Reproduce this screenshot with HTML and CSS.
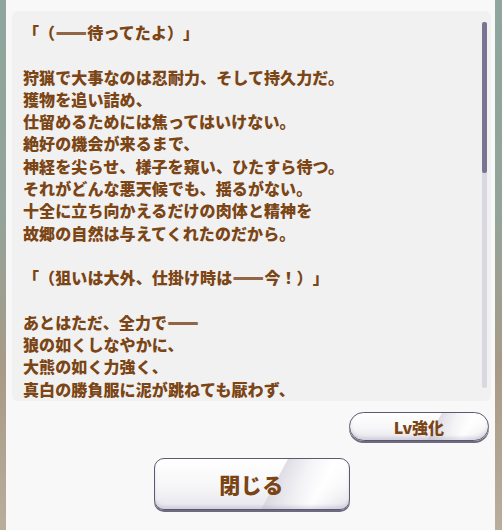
FILE: index.html
```html
<!DOCTYPE html>
<html lang="ja">
<head>
<meta charset="utf-8">
<link rel="stylesheet" href="styles.css">
</head>
<body>
<div class="panel">
  <div class="textbox">
    <div class="text">
      <p>「（<span class="dash">――</span>待ってたよ）」</p>
      <p>&nbsp;</p>
      <p>狩猟で大事なのは忍耐力、そして持久力だ。</p>
      <p>獲物を追い詰め、</p>
      <p>仕留めるためには焦ってはいけない。</p>
      <p>絶好の機会が来るまで、</p>
      <p>神経を尖らせ、様子を窺い、ひたすら待つ。</p>
      <p>それがどんな悪天候でも、揺るがない。</p>
      <p>十全に立ち向かえるだけの肉体と精神を</p>
      <p>故郷の自然は与えてくれたのだから。</p>
      <p>&nbsp;</p>
      <p>「（狙いは大外、仕掛け時は<span class="dash">――</span>今！）」</p>
      <p>&nbsp;</p>
      <p>あとはただ、全力で<span class="dash">――</span></p>
      <p>狼の如くしなやかに、</p>
      <p>大熊の如く力強く、</p>
      <p>真白の勝負服に泥が跳ねても厭わず、</p>
    </div>
    <div class="scrolltrack"><div class="scrollthumb"></div></div>
  </div>
  <div class="row-right">
    <button class="btn btn-small">Lv強化</button>
  </div>
  <div class="row-center">
    <button class="btn btn-large">閉じる</button>
  </div>
</div>
</body>
</html>
```
FILE: styles.css
```css
* { box-sizing: border-box; }
html, body { margin: 0; padding: 0; }
body {
  width: 502px;
  height: 530px;
  overflow: hidden;
  background: linear-gradient(to bottom, #8fa59d 0%, #93a49a 40%, #a89a86 70%, #b9ad9c 100%);
  font-family: "Noto Sans CJK JP", "Noto Sans", sans-serif;
}
.panel {
  margin-left: 6px;
  width: 489px;
  height: 530px;
  background: #f8f8f8;
  padding: 11px 4px 0 6px;
  display: flex;
  flex-direction: column;
}
.textbox {
  height: 390px;
  background: #f1f1f1;
  border-radius: 6px;
  overflow: hidden;
  display: flex;
}
.text {
  flex: 1;
  padding: 10px 0 0 11px;
  color: #7b4515;
  font-size: 16px;
  font-weight: 900;
  line-height: 22.3px;
  letter-spacing: 0.1px;
  text-spacing-trim: space-all;
}
.text p { margin: 0; white-space: nowrap; }
.dash {
  text-shadow: 0 1px 0 currentColor, 0 -1px 0 currentColor;
}
.scrolltrack {
  width: 5px;
  margin: 11px 4px 13px 0;
  background: #d9d7e0;
  border-radius: 3px;
}
.scrollthumb {
  height: 151px;
  background: #797590;
  border-radius: 2px;
}
.row-right {
  display: flex;
  justify-content: flex-end;
  padding-right: 2px;
  margin-top: 11px;
}
.row-center {
  display: flex;
  justify-content: center;
  margin-top: 17px;
}
.btn {
  font-family: "Noto Sans CJK JP", "Noto Sans", sans-serif;
  font-weight: 900;
  color: #7a4414;
  border: 1.5px solid #5d5870;
  box-shadow: 0 2px 0 #6e6a80, inset 0 -3px 3px rgba(150,145,170,0.25);
  background:
    linear-gradient(118deg, rgba(255,255,255,0) 60%, rgba(215,214,222,0.8) 60.5%, rgba(240,240,244,0.6) 72%, rgba(255,255,255,0.9) 82%, rgba(245,245,248,0) 95%),
    linear-gradient(to bottom, #ffffff 0%, #f6f6f8 55%, #e7e6ec 100%);
  padding: 0;
  cursor: pointer;
}
.btn-small {
  width: 140px;
  height: 29px;
  border-radius: 15px;
  font-size: 16px;
  line-height: 1;
}
.btn-large {
  width: 196px;
  height: 52px;
  border-radius: 10px;
  font-size: 21px;
  line-height: 1;
  letter-spacing: 0.5px;
}
```
